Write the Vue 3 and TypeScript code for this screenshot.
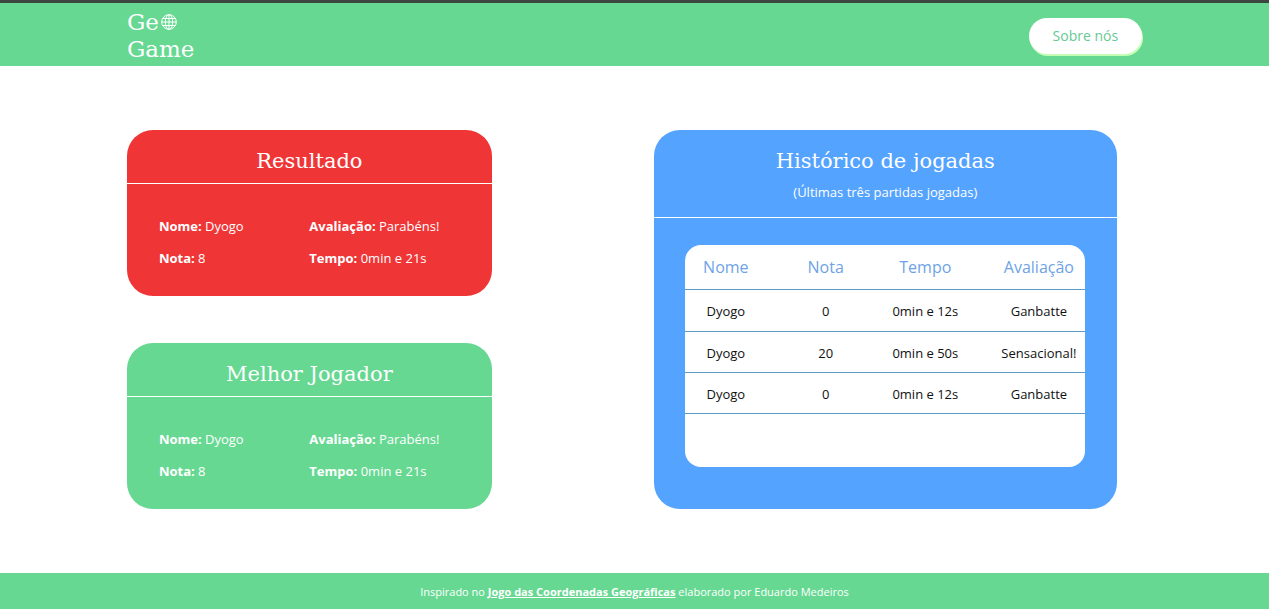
<script setup lang="ts">
interface Play {
  nome: string
  nota: number
  tempo: string
  avaliacao: string
}

interface Summary extends Play {
  id: string
  title: string
}

const summaries: Summary[] = [
  { id: 'resultado', title: 'Resultado', nome: 'Dyogo', nota: 8, tempo: '0min e 21s', avaliacao: 'Parabéns!' },
  { id: 'melhor', title: 'Melhor Jogador', nome: 'Dyogo', nota: 8, tempo: '0min e 21s', avaliacao: 'Parabéns!' },
]

const plays: Play[] = [
  { nome: 'Dyogo', nota: 0, tempo: '0min e 12s', avaliacao: 'Ganbatte' },
  { nome: 'Dyogo', nota: 20, tempo: '0min e 50s', avaliacao: 'Sensacional!' },
  { nome: 'Dyogo', nota: 0, tempo: '0min e 12s', avaliacao: 'Ganbatte' },
]
</script>

<template>
  <div class="page">
    <header class="topbar">
      <a class="logo" href="#">
        <span class="logo-line">Ge<svg class="globe" viewBox="0 0 16 16" role="img" aria-label="o">
          <g fill="none" stroke="currentColor" stroke-width="1">
            <circle cx="8" cy="8" r="7.3" />
            <ellipse cx="8" cy="8" rx="3.7" ry="7.3" />
            <path d="M8 .7v14.6M.7 8h14.6M1.6 4.5h12.8M1.6 11.5h12.8" />
          </g>
        </svg></span>
        <span class="logo-line">Game</span>
      </a>
      <button class="about" type="button">Sobre nós</button>
    </header>

    <main class="content">
      <div class="summaries">
        <section v-for="s in summaries" :key="s.id" class="card" :class="s.id">
          <h2 class="card-head">{{ s.title }}</h2>
          <div class="details">
            <p><strong>Nome:</strong> {{ s.nome }}</p>
            <p><strong>Avaliação:</strong> {{ s.avaliacao }}</p>
            <p><strong>Nota:</strong> {{ s.nota }}</p>
            <p><strong>Tempo:</strong> {{ s.tempo }}</p>
          </div>
        </section>
      </div>

      <section class="card history">
        <div class="history-head">
          <h2>Histórico de jogadas</h2>
          <p>(Últimas três partidas jogadas)</p>
        </div>
        <div class="sheet">
          <table>
            <thead>
              <tr>
                <th scope="col">Nome</th>
                <th scope="col">Nota</th>
                <th scope="col">Tempo</th>
                <th scope="col">Avaliação</th>
              </tr>
            </thead>
            <tbody>
              <tr v-for="(p, i) in plays" :key="i">
                <td>{{ p.nome }}</td>
                <td>{{ p.nota }}</td>
                <td>{{ p.tempo }}</td>
                <td>{{ p.avaliacao }}</td>
              </tr>
            </tbody>
          </table>
        </div>
      </section>
    </main>

    <footer class="footer">
      Inspirado no <a href="#">Jogo das Coordenadas Geográficas</a> elaborado por Eduardo Medeiros
    </footer>
  </div>
</template>

<style>
body {
  margin: 0;
  background: #fff;
}
</style>

<style scoped>
.page {
  font-family: "Open Sans", "Noto Sans", sans-serif;
  font-size: 13px;
  line-height: 18px;
  color: #fff;
}

h2,
p {
  margin: 0;
}

h2 {
  font-family: "DejaVu Serif", serif;
  font-size: 21px;
  line-height: 28px;
  font-weight: 400;
  text-align: center;
}

.topbar {
  display: flex;
  align-items: center;
  justify-content: space-between;
  box-sizing: border-box;
  min-height: 66px;
  padding: 2px 10% 0;
  border-top: 3px solid #3e4641;
  background: #66d892;
}

.logo {
  display: flex;
  flex-direction: column;
  font-family: "DejaVu Serif", serif;
  font-size: 23px;
  line-height: 27px;
  color: #fff;
  text-decoration: none;
}

.logo-line {
  display: flex;
  align-items: center;
}

.globe {
  width: 16px;
  height: 16px;
  margin-left: 2px;
}

.about {
  padding: 8px 24px;
  border: 0;
  border-radius: 20px;
  background: #fff;
  box-shadow: 1px 2px 0 #c4ffb5;
  font: inherit;
  font-size: 14px;
  line-height: 20px;
  color: #67c993;
  cursor: pointer;
}

.content {
  display: grid;
  grid-template-columns: 365fr 463fr;
  column-gap: 162px;
  padding: 64px 12% 64px 10%;
}

.summaries {
  display: flex;
  flex-direction: column;
  justify-content: space-between;
  gap: 47px;
}

.card {
  border-radius: 26px;
}

.resultado {
  background: #f03537;
}

.melhor {
  background: #66d892;
}

.history {
  background: #54a3ff;
}

.card-head {
  padding: 17px 16px 8px;
  border-bottom: 1px solid #fff;
}

.details {
  display: grid;
  grid-template-columns: 1fr 1fr;
  row-gap: 14px;
  padding: 33px 32px 29px;
}

.history-head {
  padding: 17px 16px 16px;
  border-bottom: 1px solid #fff;
  text-align: center;
}

.history-head p {
  margin-top: 8px;
}

.sheet {
  min-height: 222px;
  margin: 27px 32px 42px 31px;
  border-radius: 16px;
  background: #fff;
}

table {
  width: 100%;
  table-layout: fixed;
  border-collapse: separate;
  border-spacing: 0;
  color: #111;
}

th,
td {
  padding: 0;
  border-bottom: 1px solid #5b9ac4;
  text-align: center;
  white-space: nowrap;
}

th {
  height: 44px;
  font-size: 16px;
  font-weight: 400;
  color: #6ea3e6;
}

td {
  height: 40px;
  padding-top: 1px;
  box-sizing: border-box;
  height: 41px;
}

tbody tr:first-child td {
  height: 42px;
}

th:nth-child(1) {
  width: 82px;
}

th:nth-child(1),
td:nth-child(1) {
  padding-right: 27px;
}

th:nth-child(2) {
  width: 16%;
}

th:nth-child(3) {
  width: 34%;
}

th:nth-child(4) {
  width: 23%;
}

.footer {
  padding: 10px 16px 8px;
  background: #66d892;
  font-size: 11px;
  text-align: center;
}

.footer a {
  color: #fff;
  font-weight: 700;
}

@media (max-width: 900px) {
  .content {
    grid-template-columns: 1fr;
    row-gap: 47px;
    padding: 48px 5%;
  }
}
</style>
